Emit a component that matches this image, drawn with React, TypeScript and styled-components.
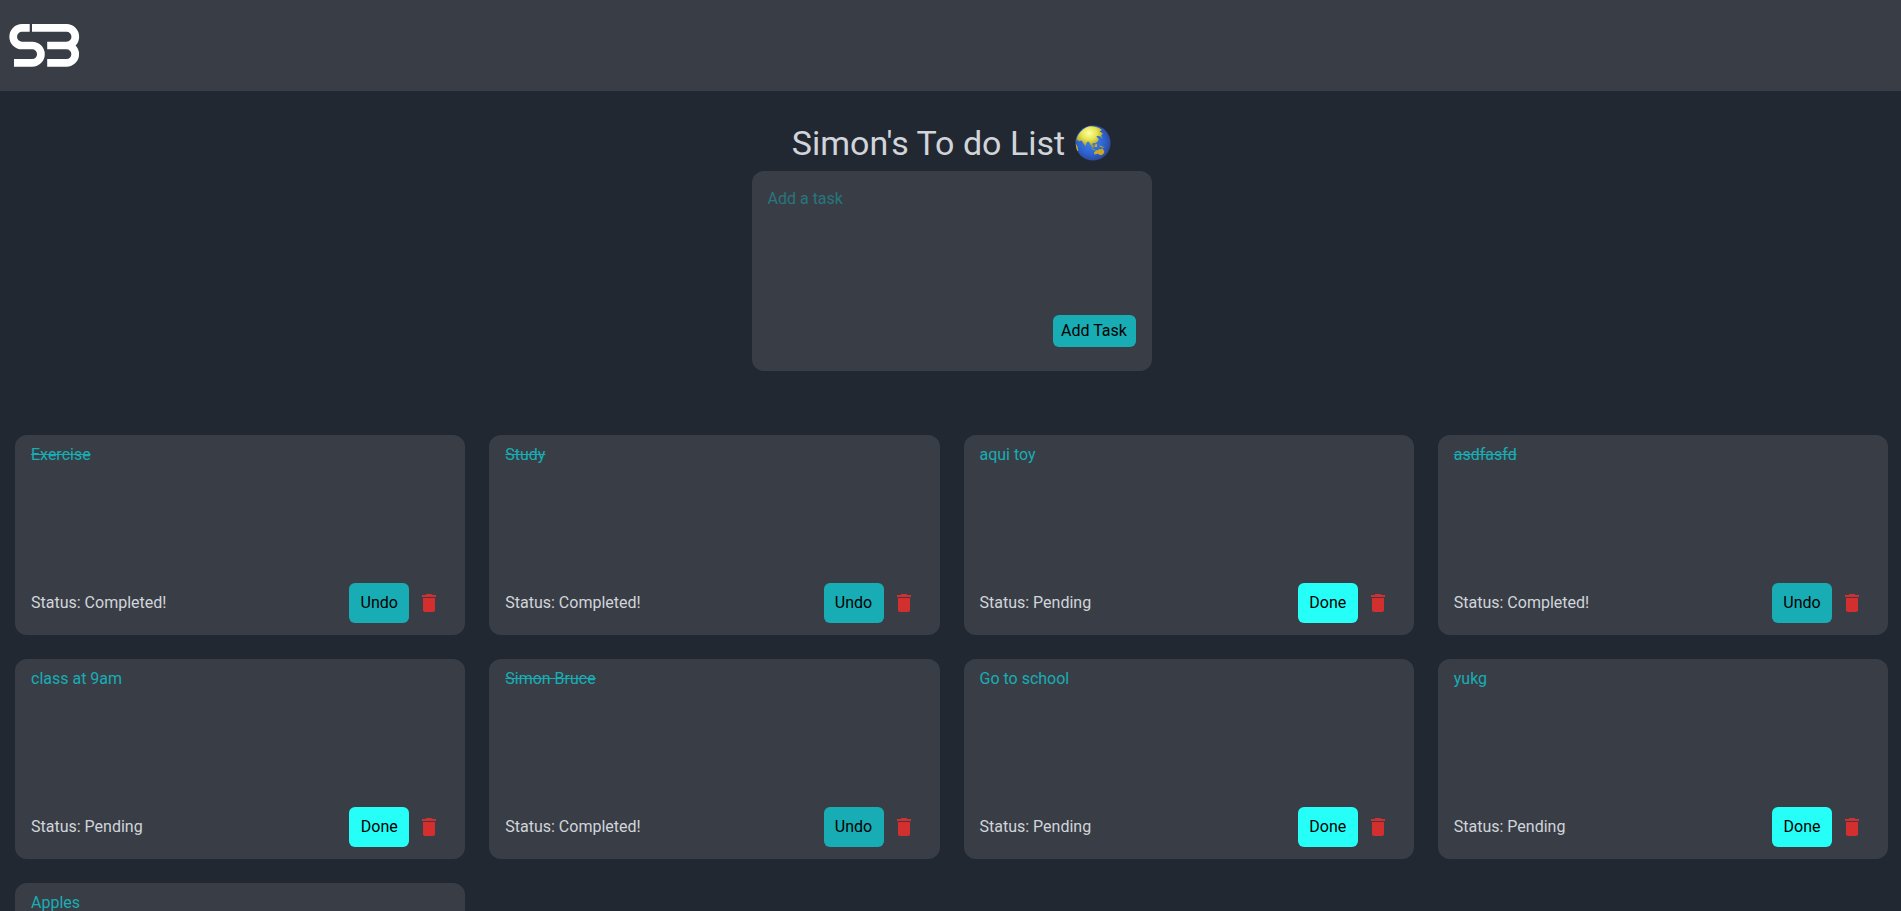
import React, { useState } from "react";
import styled, { createGlobalStyle, css } from "styled-components";
import { MdDelete } from "react-icons/md";

const colors = {
  page: "#222831",
  panel: "#393e46",
  text: "#d1d5db",
  teal: "#18adb5",
  cyan: "#26fff8",
  red: "#d32f2f",
};

const GlobalStyle = createGlobalStyle`
  *, *::before, *::after { box-sizing: border-box; }
  body {
    margin: 0;
    background: ${colors.page};
    color: ${colors.text};
    font-family: Roboto, "Liberation Sans", sans-serif;
    font-size: 16px;
    line-height: 24px;
  }
  button, textarea { font: inherit; }
`;

const Header = styled.header`
  display: flex;
  align-items: center;
  height: 91px;
  padding: 0 9px;
  background: ${colors.panel};
`;

const HomeLink = styled.a`
  display: flex;
`;

const Main = styled.main`
  display: flex;
  flex-direction: column;
  padding: 32px 13px 24px 15px;
`;

const Title = styled.h1`
  display: flex;
  align-items: center;
  justify-content: center;
  gap: 10px;
  margin: 0 0 8px;
  font-size: 34px;
  font-weight: 400;
  line-height: 40px;
`;

const panel = css`
  height: 200px;
  border-radius: 12px;
  background: ${colors.panel};
`;

const TaskForm = styled.form`
  ${panel}
  display: flex;
  flex-direction: column;
  align-items: flex-end;
  justify-content: space-between;
  align-self: center;
  width: 400px;
  max-width: 100%;
  margin-bottom: 64px;
  padding: 16px 16px 24px;
`;

const TaskInput = styled.textarea`
  width: 100%;
  height: 96px;
  padding: 0;
  border: 0;
  outline: 0;
  resize: none;
  background: transparent;
  color: ${colors.teal};

  &::placeholder {
    color: ${colors.teal};
    opacity: 0.5;
  }
`;

const Button = styled.button<{ $tone: "teal" | "cyan"; $large?: boolean }>`
  height: ${(p) => (p.$large ? 40 : 32)}px;
  min-width: ${(p) => (p.$large ? 60 : 83)}px;
  padding: 0 8px;
  border: 0;
  border-radius: 6px;
  background: ${(p) => colors[p.$tone]};
  color: #000;
  cursor: pointer;
`;

const TaskGrid = styled.ul`
  display: grid;
  grid-template-columns: repeat(4, minmax(0, 1fr));
  gap: 24px;
  margin: 0;
  padding: 0;
  list-style: none;

  @media (max-width: 1100px) {
    grid-template-columns: repeat(2, minmax(0, 1fr));
  }
`;

const TaskCard = styled.li`
  ${panel}
  display: flex;
  flex-direction: column;
  justify-content: space-between;
  padding: 8px 16px 12px;
`;

const TaskName = styled.p<{ $done: boolean }>`
  margin: 0;
  color: ${colors.teal};
  text-decoration: ${(p) => (p.$done ? "line-through" : "none")};
`;

const TaskFooter = styled.div`
  display: flex;
  align-items: center;
`;

const Status = styled.span`
  flex: 1;
`;

const DeleteButton = styled.button`
  display: flex;
  padding: 8px;
  border: 0;
  background: transparent;
  color: ${colors.red};
  cursor: pointer;
`;

function Logo() {
  return (
    <svg width="71" height="43" viewBox="0 0 71 43" fill="none" stroke="#fff" strokeWidth="7.700">
      <path d="M20.700 3.900H13A8.800 8.800 0 0 0 13 21.500H23.200A8.700 8.700 0 0 1 23.200 38.900H5" />
      <path d="M23 3.900H57.500A8.800 8.800 0 0 1 57.500 21.500H38.200M57.500 21.500A8.700 8.700 0 0 1 57.500 38.900H38.200" />
    </svg>
  );
}

function Globe() {
  return (
    <svg width="36" height="36" viewBox="0 0 44 44" role="img" aria-label="Globe">
      <defs>
        <radialGradient id="sea" cx="0.45" cy="0.45" r="0.58">
          <stop offset="0" stopColor="#4285e0" />
          <stop offset="0.65" stopColor="#2c62d0" />
          <stop offset="1" stopColor="#2d4690" />
        </radialGradient>
        <radialGradient id="land" cx="0.48" cy="0.3" r="0.6">
          <stop offset="0" stopColor="#ffffa6" />
          <stop offset="0.5" stopColor="#e6e54f" />
          <stop offset="1" stopColor="#a99a28" />
        </radialGradient>
      </defs>
      <circle cx="22" cy="22" r="21.500" fill="url(#sea)" />
      <path
        fill="url(#land)"
        d="M4 12Q10 3 18 1.500Q27 1 33 6L30 8L34 10L32 13L34 17L31 14L28 13L26 14L29 17L28 20L25 22L22 22L21 24L23 26L22 29L20 26L18 22L16 20L14 22L13 26L10 22L8 19L5 20L3 18L2 21Q1 16 4 12Z"
      />
      <path
        fill="#c9a928"
        d="M1 23L3 26L4 31L3 32Q1 28 1 23ZM23 34L26 31L28 31L30 29L32 30L33 28L35 31L36 33L34 36L31 37L28 35L24 36ZM24 24L27 23L27 27L24 27ZM29 25L33 26L36 28L31 27ZM19 28L23 30L27 31L23 31Z"
      />
    </svg>
  );
}

interface Task {
  name: string;
  done: boolean;
}

const initialTasks: Task[] = [
  { name: "Exercise", done: true },
  { name: "Study", done: true },
  { name: "aqui toy", done: false },
  { name: "asdfasfd", done: true },
  { name: "class at 9am", done: false },
  { name: "Simon Bruce", done: true },
  { name: "Go to school", done: false },
  { name: "yukg", done: false },
  { name: "Apples", done: false },
];

export default function App() {
  const [tasks, setTasks] = useState(initialTasks);
  const [draft, setDraft] = useState("");

  const addTask = (event: React.FormEvent) => {
    event.preventDefault();
    if (!draft.trim()) return;
    setTasks([...tasks, { name: draft, done: false }]);
    setDraft("");
  };
  const toggle = (index: number) =>
    setTasks(tasks.map((task, i) => (i === index ? { ...task, done: !task.done } : task)));
  const remove = (index: number) => setTasks(tasks.filter((_, i) => i !== index));

  return (
    <>
      <GlobalStyle />
      <Header>
        <HomeLink href="/" aria-label="Home">
          <Logo />
        </HomeLink>
      </Header>
      <Main>
        <Title>
          Simon's To do List <Globe />
        </Title>
        <TaskForm onSubmit={addTask}>
          <TaskInput
            aria-label="Add a task"
            placeholder="Add a task"
            value={draft}
            onChange={(event) => setDraft(event.target.value)}
          />
          <Button type="submit" $tone="teal">Add Task</Button>
        </TaskForm>
        <TaskGrid>
          {tasks.map((task, index) => (
            <TaskCard key={index}>
              <TaskName $done={task.done}>{task.name}</TaskName>
              <TaskFooter>
                <Status>Status: {task.done ? "Completed!" : "Pending"}</Status>
                <Button type="button" $large $tone={task.done ? "teal" : "cyan"} onClick={() => toggle(index)}>
                  {task.done ? "Undo" : "Done"}
                </Button>
                <DeleteButton type="button" aria-label={`Delete ${task.name}`} onClick={() => remove(index)}>
                  <MdDelete size={24} />
                </DeleteButton>
              </TaskFooter>
            </TaskCard>
          ))}
        </TaskGrid>
      </Main>
    </>
  );
}
